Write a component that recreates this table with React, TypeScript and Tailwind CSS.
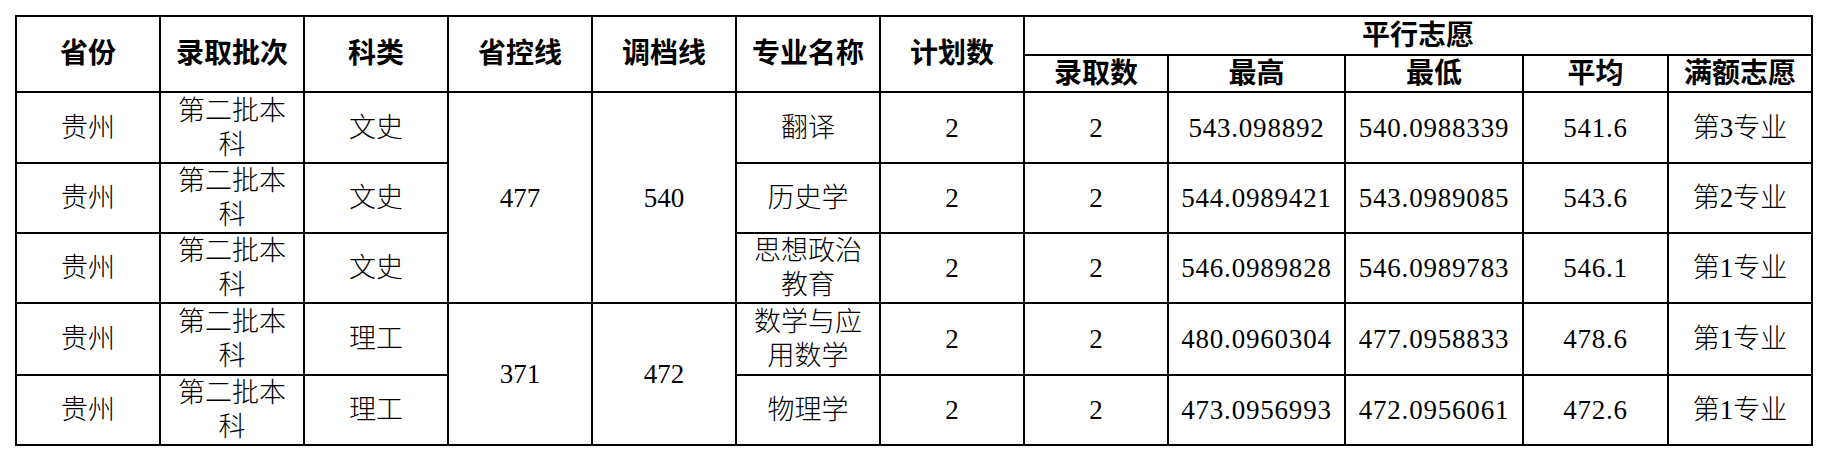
import React from 'react';

type Row = {
  province: string;
  batch: string;
  subject: string;
  major: string;
  plan: number;
  admitted: number;
  highest: string;
  lowest: string;
  average: string;
  full: string;
  height: string;
};

const rows: Row[] = [
  { province: '贵州', batch: '第二批本科', subject: '文史', major: '翻译', plan: 2, admitted: 2, highest: '543.098892', lowest: '540.0988339', average: '541.6', full: '第3专业', height: 'h-[71px]' },
  { province: '贵州', batch: '第二批本科', subject: '文史', major: '历史学', plan: 2, admitted: 2, highest: '544.0989421', lowest: '543.0989085', average: '543.6', full: '第2专业', height: 'h-[69px]' },
  { province: '贵州', batch: '第二批本科', subject: '文史', major: '思想政治教育', plan: 2, admitted: 2, highest: '546.0989828', lowest: '546.0989783', average: '546.1', full: '第1专业', height: 'h-[68px]' },
  { province: '贵州', batch: '第二批本科', subject: '理工', major: '数学与应用数学', plan: 2, admitted: 2, highest: '480.0960304', lowest: '477.0958833', average: '478.6', full: '第1专业', height: 'h-[72px]' },
  { province: '贵州', batch: '第二批本科', subject: '理工', major: '物理学', plan: 2, admitted: 2, highest: '473.0956993', lowest: '472.0956061', average: '472.6', full: '第1专业', height: 'h-[68px]' },
];

// merged cells for 省控线 / 调档线
const lines: Record<number, { span: number; control: string; file: string }> = {
  0: { span: 3, control: '477', file: '540' },
  3: { span: 2, control: '371', file: '472' },
};

const th = 'border-2 border-black text-center align-middle font-bold text-[28px] leading-[30px] px-[6px] py-0';
const td = 'border-2 border-black text-center align-middle text-[27px] leading-[34px] px-[8px] py-0 font-light';
const num = td + ' tracking-[0.8px]';

export default function App() {
  return (
    <div
      className="bg-white w-[1828px] h-[456px] pt-[15px] pl-[15px] text-black"
      style={{ fontFamily: '"Liberation Serif", "Noto Sans CJK SC", serif' }}>
      <table className="table-fixed border-collapse w-[1798px]">
        <colgroup>
          <col className="w-[144px]" />
          <col className="w-[144px]" />
          <col className="w-[144px]" />
          <col className="w-[144px]" />
          <col className="w-[144px]" />
          <col className="w-[144px]" />
          <col className="w-[144px]" />
          <col className="w-[144px]" />
          <col className="w-[177px]" />
          <col className="w-[178px]" />
          <col className="w-[145px]" />
          <col className="w-[144px]" />
        </colgroup>
        <thead>
          <tr className="h-[39px]">
            <th rowSpan={2} className={th}>省份</th>
            <th rowSpan={2} className={th}>录取批次</th>
            <th rowSpan={2} className={th}>科类</th>
            <th rowSpan={2} className={th}>省控线</th>
            <th rowSpan={2} className={th}>调档线</th>
            <th rowSpan={2} className={th}>专业名称</th>
            <th rowSpan={2} className={th}>计划数</th>
            <th colSpan={5} className={th}>平行志愿</th>
          </tr>
          <tr className="h-[37px]">
            <th className={th}>录取数</th>
            <th className={th}>最高</th>
            <th className={th}>最低</th>
            <th className={th}>平均</th>
            <th className={th}>满额志愿</th>
          </tr>
        </thead>
        <tbody>
          {rows.map((r, i) => (
            <tr key={i} className={r.height}>
              <td className={td}>{r.province}</td>
              <td className={td}>{r.batch}</td>
              <td className={td}>{r.subject}</td>
              {lines[i] && (
                <>
                  <td rowSpan={lines[i].span} className={td}>{lines[i].control}</td>
                  <td rowSpan={lines[i].span} className={td}>{lines[i].file}</td>
                </>
              )}
              <td className={td}>{r.major}</td>
              <td className={td}>{r.plan}</td>
              <td className={td}>{r.admitted}</td>
              <td className={num}>{r.highest}</td>
              <td className={num}>{r.lowest}</td>
              <td className={num}>{r.average}</td>
              <td className={td}>{r.full}</td>
            </tr>
          ))}
        </tbody>
      </table>
    </div>
  );
}
